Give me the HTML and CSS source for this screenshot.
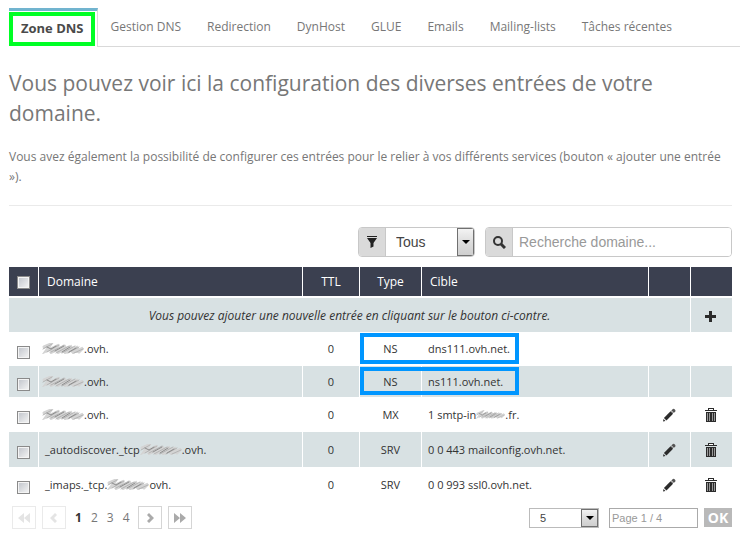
FILE: index.html
```html
<!DOCTYPE html>
<html lang="fr">
<head>
<meta charset="utf-8">
<meta name="viewport" content="width=device-width, initial-scale=1">
<title>Zone DNS</title>
<link rel="stylesheet" href="styles.css">
</head>
<body>
<svg class="defs" aria-hidden="true">
  <filter id="soft"><feGaussianBlur stdDeviation="0.7"/></filter>
  <symbol id="scribble" viewBox="0 0 42 14">
    <g fill="none" stroke-linecap="round" filter="url(#soft)">
      <path stroke="#d4d4d4" stroke-width="3" d="M2 5 9 2 4 9 17 3 8 11 24 4 15 11 30 4 22 11 36 5 30 11 41 6 37 10"/>
      <path stroke="#b4b4b4" stroke-width="1" d="M1 7 10 2M5 10 17 3M9 10 22 3M14 11 27 4M20 11 33 4M26 11 37 5M32 11 41 7"/>
      <path stroke="#8c8c8c" stroke-width="1" d="M5 5 9 7 14 4M13 9 22 4M20 10 28 5M27 10 34 6"/>
    </g>
  </symbol>
  <symbol id="pencil" viewBox="0 0 14 14">
    <path fill="#2b2b2b" d="M1 13.500 1.500 11 3.500 13Z"/>
    <path stroke="#2b2b2b" stroke-width="3.600" d="M3.200 11.200 9.800 4.600"/>
    <path stroke="#555" stroke-width="3.600" stroke-linecap="round" d="M11.300 3 11.600 2.700"/>
    <path stroke="#bbb" stroke-width="1" d="M9.500 2.700 11.600 4.800"/>
  </symbol>
  <symbol id="trash" viewBox="0 0 12 14">
    <path fill="#2b2b2b" d="M3 0h6v2h3v1H0V2h3ZM1 4h10v10H1Z"/>
    <path stroke="#999" d="M2.500 5v8M4.500 5v8M7.500 5v8M9.500 5v8"/>
    <path stroke="#fff" d="M4 1.500h4"/>
  </symbol>
</svg>
<nav class="tabs">
  <a class="tab active" href="#zone"><span>Zone DNS</span></a>
  <a class="tab" href="#gestion">Gestion DNS</a>
  <a class="tab" href="#redirection">Redirection</a>
  <a class="tab" href="#dynhost">DynHost</a>
  <a class="tab" href="#glue">GLUE</a>
  <a class="tab" href="#emails">Emails</a>
  <a class="tab" href="#lists">Mailing-lists</a>
  <a class="tab" href="#taches">Tâches récentes</a>
</nav>
<main>
  <h1>Vous pouvez voir ici la configuration des diverses entrées de votre domaine.</h1>
  <p class="intro">Vous avez également la possibilité de configurer ces entrées pour le relier à vos différents services (bouton «&nbsp;ajouter une entrée »).</p>
  <form class="filters">
    <div class="group">
      <label class="addon" for="type" aria-label="Type"><svg width="12" height="14" viewBox="0 0 12 14"><path fill="#222" d="M1 1h10v1H1ZM1 3h10L7.500 8v3.500L4.500 13V8Z"/></svg></label>
      <span class="select"><select id="type"><option>Tous</option></select><i class="arrow"></i></span>
    </div>
    <div class="group search">
      <label class="addon" for="search" aria-label="Recherche"><svg width="14" height="14" viewBox="0 0 14 14"><circle cx="6" cy="6" r="4" fill="none" stroke="#333" stroke-width="2"/><path stroke="#333" stroke-width="3" d="m9 9 4 4"/></svg></label>
      <input id="search" type="text" placeholder="Recherche domaine...">
    </div>
  </form>
  <table>
    <colgroup><col class="c-check"><col class="c-domain"><col class="c-ttl"><col class="c-type"><col><col class="c-action"><col class="c-action"></colgroup>
    <thead>
      <tr><th><input type="checkbox" aria-label="Tout"></th><th class="left">Domaine</th><th>TTL</th><th>Type</th><th class="left">Cible</th><th></th><th></th></tr>
    </thead>
    <tbody>
      <tr class="add"><td colspan="6">Vous pouvez ajouter une nouvelle entrée en cliquant sur le bouton ci-contre.</td><td><button class="icon" aria-label="Ajouter"><svg width="11" height="11" viewBox="0 0 11 11"><path stroke="#2b2b2b" stroke-width="3" d="M5.500 0v11M0 5.500h11"/></svg></button></td></tr>
      <tr class="plain"><td><input type="checkbox" aria-label="Entrée 1"></td><td class="domain masked"><svg class="scribble"><use href="#scribble"/></svg>.ovh.</td><td>0</td><td class="mark">NS</td><td class="target">dns111.ovh.net.</td><td></td><td></td></tr>
      <tr class="shade short"><td><input type="checkbox" aria-label="Entrée 2"></td><td class="domain masked"><svg class="scribble"><use href="#scribble"/></svg>.ovh.</td><td>0</td><td class="mark">NS</td><td class="target">ns111.ovh.net.</td><td></td><td></td></tr>
      <tr><td><input type="checkbox" aria-label="Entrée 3"></td><td class="domain masked"><svg class="scribble"><use href="#scribble"/></svg>.ovh.</td><td>0</td><td>MX</td><td class="target">1 smtp-in<svg class="scribble small"><use href="#scribble"/></svg>.fr.</td><td><button class="icon" aria-label="Modifier"><svg width="14" height="14"><use href="#pencil"/></svg></button></td><td><button class="icon" aria-label="Supprimer"><svg width="12" height="14"><use href="#trash"/></svg></button></td></tr>
      <tr class="shade"><td><input type="checkbox" aria-label="Entrée 4"></td><td class="domain">_autodiscover._tcp<svg class="scribble"><use href="#scribble"/></svg>.ovh.</td><td>0</td><td>SRV</td><td class="target">0 0 443 mailconfig.ovh.net.</td><td><button class="icon" aria-label="Modifier"><svg width="14" height="14"><use href="#pencil"/></svg></button></td><td><button class="icon" aria-label="Supprimer"><svg width="12" height="14"><use href="#trash"/></svg></button></td></tr>
      <tr><td><input type="checkbox" aria-label="Entrée 5"></td><td class="domain">_imaps._tcp.<svg class="scribble"><use href="#scribble"/></svg>ovh.</td><td>0</td><td>SRV</td><td class="target">0 0 993 ssl0.ovh.net.</td><td><button class="icon" aria-label="Modifier"><svg width="14" height="14"><use href="#pencil"/></svg></button></td><td><button class="icon" aria-label="Supprimer"><svg width="12" height="14"><use href="#trash"/></svg></button></td></tr>
    </tbody>
  </table>
  <footer class="pager">
    <button class="step" disabled aria-label="Première page"><svg width="12" height="10" viewBox="0 0 12 10"><path d="M6 0v10L0 5ZM12 0v10L6 5Z"/></svg></button>
    <button class="step" disabled aria-label="Page précédente"><svg width="8" height="10" viewBox="0 0 8 10"><path d="M5 0 7 2 4 5 7 8 5 10 0 5Z"/></svg></button>
    <span class="pages"><a class="current" href="#p1">1</a><a href="#p2">2</a><a href="#p3">3</a><a href="#p4">4</a></span>
    <button class="step" aria-label="Page suivante"><svg width="8" height="10" viewBox="0 0 8 10"><path d="M3 0 1 2 4 5 1 8 3 10 8 5Z"/></svg></button>
    <button class="step" aria-label="Dernière page"><svg width="12" height="10" viewBox="0 0 12 10"><path d="M0 0v10L6 5ZM6 0v10L12 5Z"/></svg></button>
    <span class="select size"><select aria-label="Entrées par page"><option>5</option></select><i class="arrow"></i></span>
    <input class="goto" type="text" placeholder="Page 1 / 4" aria-label="Page">
    <button class="ok">OK</button>
  </footer>
</main>
</body>
</html>
```
FILE: styles.css
```css
*, *::after { box-sizing: border-box; }
body {
  margin: 0;
  padding: 8px 0 0;
  background: #fff;
  color: #777;
  font: 12px/20px "Open Sans", sans-serif;
}
a { color: inherit; text-decoration: none; }
button, input, select { margin: 0; border-radius: 0; }
.defs { position: absolute; width: 0; height: 0; }

.tabs { display: flex; height: 39px; margin-left: 9px; }
.tab { padding: 9px 13px; border-bottom: 1px solid #d9d9d9; }
.tab:last-child { flex: 1; }
.tab.active {
  padding: 1px 2px 0 0;
  border-top: 3px solid #71b4cf;
  border-right: 1px solid #d9d9d9;
  border-bottom: 0;
  color: #4a4a4a;
  font-size: 13px;
  font-weight: 700;
}
.tab.active span {
  display: block;
  height: 34px;
  padding: 2px 7px 0 8px;
  border: 4px solid #00ff25;
}

main { padding: 0 8px 0 9px; }
h1 { margin: 21px 0 0; font-size: 21px; font-weight: 400; line-height: 30px; }
.intro { margin: 19px 0 0; padding-bottom: 18px; border-bottom: 1px solid #eaeaea; }

.filters { display: flex; justify-content: flex-end; gap: 10px; margin-top: 21px; }
.group {
  display: flex;
  height: 30px;
  overflow: hidden;
  border: 1px solid #c8c8c8;
  border-radius: 4px;
}
.search { width: 247px; }
.addon {
  display: flex;
  align-items: center;
  justify-content: center;
  width: 27px;
  flex: none;
  background: #dadada;
  border-right: 1px solid #c8c8c8;
}
.search input {
  flex: 1;
  min-width: 0;
  padding: 0 6px;
  border: 0;
  font: 14px "Liberation Sans", sans-serif;
}
input::placeholder { color: #999; opacity: 1; }
.select { display: flex; position: relative; width: 88px; }
.select select {
  flex: 1;
  padding: 0 10px;
  border: 0;
  background: #fff;
  color: #444;
  font: 14px "Liberation Sans", sans-serif;
  appearance: none;
}
.arrow {
  display: flex;
  position: absolute;
  top: 0;
  right: 0;
  bottom: 0;
  align-items: center;
  justify-content: center;
  width: 17px;
  border: 1px solid #707070;
  background: linear-gradient(#f3f3f3, #ddd 50%, #cfcfcf);
  pointer-events: none;
}
.arrow::after {
  border: 4px solid transparent;
  border-top-color: #000;
  border-bottom: 0;
  content: "";
}

table {
  width: 100%;
  margin-top: 10px;
  border-collapse: separate;
  border-spacing: 0;
  table-layout: fixed;
  color: #333;
  font-size: 11px;
}
.c-check { width: 29px; }
.c-domain { width: 264px; }
.c-ttl { width: 57px; }
.c-type { width: 62px; }
.c-action { width: 42px; }
th, td { padding: 0; border-left: 1px solid #fff; text-align: center; }
th:first-child, td:first-child { border-left: 0; }
th {
  height: 31px;
  border-bottom: 2px solid #fff;
  background: #3b4050;
  background-clip: padding-box;
  color: #fff;
  font-size: 12px;
  font-weight: 400;
}
th.left { padding-left: 8px; text-align: left; }
td { height: 35px; }
.add td { height: 34px; padding-top: 2px; background: #d8e1e3; font-size: 12px; font-style: italic; }
.shade td { background: #d8e1e3; }
.plain td { height: 34px; }
.short td { height: 31px; }
.domain { padding-left: 6px; text-align: left; white-space: nowrap; }
.domain.masked { padding-left: 3px; }
.target { padding-left: 6px; text-align: left; }
.scribble { width: 42px; height: 14px; vertical-align: -3px; }
.scribble.small { width: 29px; }
.mark { position: relative; }
.mark::after {
  position: absolute;
  top: 1px;
  left: 0;
  bottom: 2px;
  width: 159px;
  border: 4px solid #0096ff;
  content: "";
}
input[type="checkbox"] {
  width: 13px;
  height: 13px;
  border: 1px solid #8a8a8a;
  outline: 1px solid #f4f4f4;
  outline-offset: -2px;
  background: linear-gradient(135deg, #bfc3ca, #f6f6f6);
  vertical-align: middle;
  appearance: none;
}
td input[type="checkbox"] { margin-top: 4px; }
.icon { display: block; margin: 0 auto; padding: 0 2px 0 0; border: 0; background: none; }
.icon svg { display: block; }

.pager { display: flex; align-items: center; gap: 6px; margin-top: 4px; padding-left: 3px; }
.step {
  display: flex;
  align-items: center;
  justify-content: center;
  width: 24px;
  height: 23px;
  padding: 0;
  border: 1px solid #d5d5d5;
  background: #fff;
  fill: #aaa;
}
.step svg { display: block; }
.step:disabled { border-color: #eaeaea; fill: #e4e4e4; }
.step:nth-of-type(4) { margin-right: auto; }
.pages { display: flex; gap: 9px; padding: 0 2px 0 3px; }
.pages .current { color: #333; font-weight: 700; }
.size { width: 70px; height: 20px; border: 1px solid #bbb; }
.size select { font-size: 11px; }
.goto {
  width: 89px;
  height: 20px;
  margin-left: 4px;
  padding: 0 2px;
  border: 1px solid #aaa;
  font: 11px "Liberation Sans", sans-serif;
}
.ok {
  width: 28px;
  height: 19px;
  padding: 0;
  border: 0;
  background: #b9b9b9;
  color: #fff;
  font: 700 14px "Open Sans", sans-serif;
}
```
